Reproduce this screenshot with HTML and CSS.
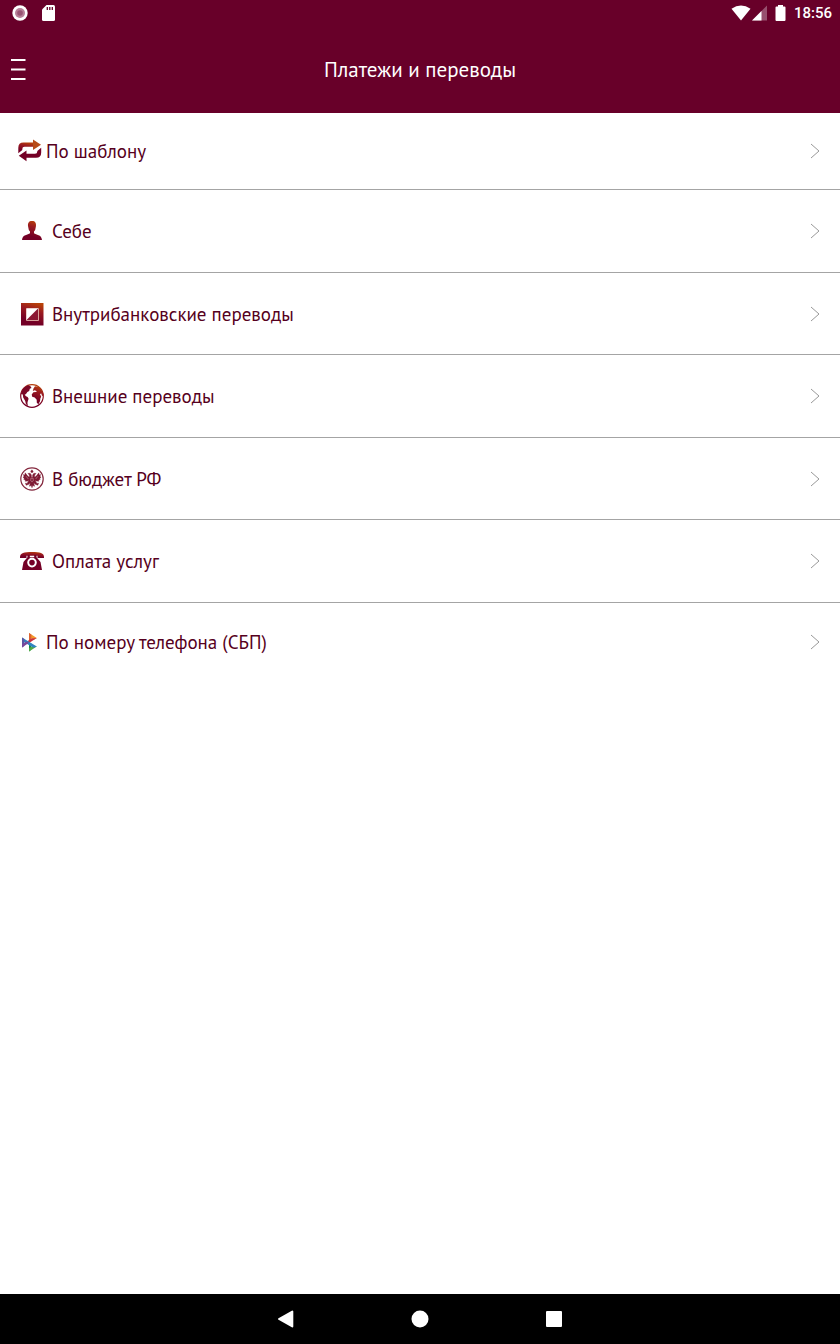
FILE: index.html
```html
<!DOCTYPE html>
<html lang="ru">
<head>
  <meta charset="UTF-8">
  <meta name="viewport" content="width=device-width, initial-scale=1">
  <title>Платежи и переводы</title>
  <link rel="stylesheet" href="styles.css">
</head>
<body>

  <!-- shared gradient for the menu icons -->
  <svg class="defs" aria-hidden="true">
    <defs>
      <linearGradient id="brand" x1="0.7" y1="0" x2="0.45" y2="0.8">
        <stop offset="0" stop-color="#b84208"/>
        <stop offset="0.4" stop-color="#9b1b20"/>
        <stop offset="1" stop-color="#740026"/>
      </linearGradient>
    </defs>
  </svg>

  <header class="header">
    <div class="status-bar">
      <div class="status-left">
        <svg width="16" height="16" viewBox="0 0 16 16">
          <circle cx="8" cy="8" r="7.7" fill="#fff"/>
          <circle cx="8" cy="8" r="5" fill="#b78099"/>
          <circle cx="8" cy="8" r="2.8" fill="#985474"/>
        </svg>
        <svg width="13" height="16" viewBox="0 0 13 16">
          <path d="M4.5 0H11.5Q13 0 13 1.5V14.5Q13 16 11.5 16H1.5Q0 16 0 14.5V4.5Z" fill="#fff"/>
          <path d="M5.3 2V5M7.8 2V5M10.3 2V5" stroke="#680029" stroke-width="1.3"/>
        </svg>
      </div>
      <div class="status-right">
        <svg width="20" height="16" viewBox="0 0 20 16">
          <path d="M10 15.5L0.5 3.8Q10 -2.8 19.5 3.8Z" fill="#fff"/>
        </svg>
        <svg width="16" height="16" viewBox="0 0 16 16">
          <path d="M16 0.5V15.5H1Z" fill="#97506e"/>
          <path d="M10.5 6V15.5H1Z" fill="#fff"/>
        </svg>
        <svg class="battery" width="11" height="16" viewBox="0 0 11 16">
          <path d="M3 0H8V1.5H9.5Q10.5 1.5 10.5 2.5V15Q10.5 16 9.5 16H1.5Q0.5 16 0.5 15V2.5Q0.5 1.5 1.5 1.5H3Z" fill="#fff"/>
        </svg>
        <span class="clock">18:56</span>
      </div>
    </div>
    <div class="title-bar">
      <button class="menu-btn" type="button" aria-label="Меню">
        <svg width="16" height="22" viewBox="0 0 16 22">
          <path d="M1 1H15.500M1 10.500H15.500M1 20H15.500" stroke="#fff" stroke-width="2"/>
        </svg>
      </button>
      <h1>Платежи и переводы</h1>
    </div>
  </header>

  <main>
    <nav class="payments">
      <a class="row compact" href="#template">
        <svg class="icon" width="24" height="24" viewBox="0 0 24 24">
          <path d="M0.3 14.2V8.8Q0.3 3.6 5.5 3.600H16V7.800H6.500Q4.300 7.800 4.300 10V11Z" fill="url(#brand)"/>
          <path d="M15 0.600L23 5.800L15 11Z" fill="#b74b18"/>
          <path d="M23.200 8.800V13.500Q23.200 18.800 18 18.800H7.500V14.800H17Q19.300 14.800 19.300 12.500V12Z" fill="#740026"/>
          <path d="M8.500 11.500L0.800 16.800L8.500 22.300Z" fill="#740026"/>
        </svg>
        <span class="label">По шаблону</span>
        <svg class="arrow" width="10" height="16" viewBox="0 0 10 16"><path d="M1 1L9 8L1 15"/></svg>
      </a>
      <a class="row" href="#self">
        <svg class="icon" width="24" height="24" viewBox="0 0 24 24">
          <path d="M12 2C15.2 2 16.4 4 15.9 7.500Q15.500 11.500 14 12.500V14.3C16 16 21.6 15.5 22 21H2C2.4 15.5 8 16 10 14.3V12.5Q8.500 11.5 8.100 7.5C7.6 4 8.8 2 12 2Z" fill="url(#brand)"/>
        </svg>
        <span class="label">Себе</span>
        <svg class="arrow" width="10" height="16" viewBox="0 0 10 16"><path d="M1 1L9 8L1 15"/></svg>
      </a>
      <a class="row" href="#bank">
        <svg class="icon" width="24" height="24" viewBox="0 0 24 24">
          <path d="M1 1H23.500V23.500H1Z" fill="url(#brand)"/>
          <path d="M6.5 6.5H18.5V18.5H6.5Z" fill="#8c1833" stroke="#d8a19b"/>
          <path d="M6.5 6.5H18L6.5 18Z" fill="#fff"/>
        </svg>
        <span class="label">Внутрибанковские переводы</span>
        <svg class="arrow" width="10" height="16" viewBox="0 0 10 16"><path d="M1 1L9 8L1 15"/></svg>
      </a>
      <a class="row" href="#external">
        <svg class="icon" width="24" height="24" viewBox="0 0 24 24">
          <circle cx="12" cy="12" r="11.3" fill="#fff" stroke="url(#brand)" stroke-width="1.2"/>
          <path d="M2 6.5Q4 2.5 8.5 1.2L10.5 2.3L11.5 4L9.8 4.7L9.2 7L7.4 8.1L6 10.1L4.7 10.7L6 12.2L7.6 13L8.600 14.8L7.8 17.3L7.400 19L8 22.3Q5.2 20.3 5.2 17L3.2 13.5L2.8 10.5L0.8 10Z" fill="#7b0827"/>
          <path d="M13.5 4.5L15 2.2L18.5 2.7Q22.6 6 23.4 11L22.1 12.3L21.3 9.5L19.9 10L21.2 12.8L20.4 14.2L20 17.3L18.4 20.3L16.8 18.8L16.7 15.8L14.7 13.4L12.2 12.8L11.7 10.6L13.4 8.2L15.8 8L17 7.2L14.7 6.2L12.8 7Z" fill="url(#brand)"/>
        </svg>
        <span class="label">Внешние переводы</span>
        <svg class="arrow" width="10" height="16" viewBox="0 0 10 16"><path d="M1 1L9 8L1 15"/></svg>
      </a>
      <a class="row" href="#budget">
        <svg class="icon" width="24" height="24" viewBox="0 0 24 24">
          <circle cx="12" cy="12" r="11.2" fill="#fff" stroke="#84283e" stroke-width="1.2"/>
          <g fill="#7d1933" stroke="#7d1933" stroke-width="0.4">
            <path d="M11.9 2.8L13.2 4.2L12.7 5.5H11.2L10.7 4.2Z"/>
            <path d="M11.4 10.3V8L10.1 6.2L7.8 6.5L9.2 7.8L9.6 10L8.2 9.6L5.1 5.8L4.9 8L3.5 7.5L4 9.8L3 10L4.3 11.7L3.7 12.3L5.5 13.3L5.1 14.2L7.5 14.1L8.8 13.5L7.1 16.4L5.4 16.2L6.2 18.3L8.8 17.2L10.3 15.8L9.4 19.3L11.2 18.6L12 20.8L12.8 18.6L14.6 19.3L13.7 15.8L15.2 17.2L17.8 18.3L18.6 16.2L16.9 16.4L15.2 13.5L16.5 14.1L18.9 14.2L18.5 13.3L20.3 12.3L19.7 11.7L21 10L20 9.8L20.5 7.5L19.1 8L18.9 5.8L15.8 9.6L14.4 10L14.8 7.8L16.2 6.5L13.9 6.2L12.6 8V10.3Z"/>
          </g>
          <path d="M10.8 11.3H13.2V14L12 15L10.8 14Z" fill="none" stroke="#d5a9af" stroke-width="0.5"/>
          <path d="M6 9.2L8.3 12M18 9.2L15.7 12" stroke="#d5a9af" stroke-width="0.5"/>
        </svg>
        <span class="label">В бюджет РФ</span>
        <svg class="arrow" width="10" height="16" viewBox="0 0 10 16"><path d="M1 1L9 8L1 15"/></svg>
      </a>
      <a class="row" href="#services">
        <svg class="icon" width="24" height="24" viewBox="0 0 24 24">
          <path d="M0 8C0 4 4 3 12 3S24 4 24 8V9H17.5V6.7H6.5V9H0Z" fill="url(#brand)"/>
          <path d="M7.5 6H9.8V8.2H14.2V6H16.5V8.2L20.5 13L22 21H2L3.5 13L7.5 8.2Z" fill="#740026"/>
          <circle cx="12" cy="13.6" r="3.8" fill="#740026" stroke="#fff" stroke-width="2"/>
        </svg>
        <span class="label">Оплата услуг</span>
        <svg class="arrow" width="10" height="16" viewBox="0 0 10 16"><path d="M1 1L9 8L1 15"/></svg>
      </a>
      <a class="row compact" href="#sbp">
        <svg class="icon" width="24" height="24" viewBox="0 0 24 24">
          <path d="M11 3L18.8 8L15.500 10L11 7Z" fill="#f2982c"/>
          <path d="M11 3L13.300 4.500V11.300L11 12.700Z" fill="#dd6230"/>
          <path d="M18.800 8L10.500 13.300L8.500 11.800L13.500 8.500Z" fill="#cb3045"/>
          <path d="M11 12.300L13.300 13.500V19.800L11 21.500Z" fill="#168a4c"/>
          <path d="M18.800 16.500L11 21.500V18.300L15.500 15.500Z" fill="#52ab45"/>
          <path d="M4 7.500L18.800 16.500L15.500 17.800L4 11Z" fill="#2f83c2"/>
          <path d="M4 7.500L6.300 9V16L4 17.500Z" fill="#5b56a3"/>
          <path d="M4 17.500V14.500L8.500 11.500L11 12.800Z" fill="#7b4699"/>
        </svg>
        <span class="label">По номеру телефона (СБП)</span>
        <svg class="arrow" width="10" height="16" viewBox="0 0 10 16"><path d="M1 1L9 8L1 15"/></svg>
      </a>
    </nav>
  </main>

  <footer class="system-nav">
    <button type="button" aria-label="Назад">
      <svg width="18" height="18" viewBox="0 0 18 18"><path d="M15.3 1.5V16.5L2 9Z" fill="#fff" stroke="#fff" stroke-width="2" stroke-linejoin="round"/></svg>
    </button>
    <button type="button" aria-label="Домой">
      <svg width="18" height="18" viewBox="0 0 18 18"><circle cx="9" cy="9" r="8.5" fill="#fff"/></svg>
    </button>
    <button type="button" aria-label="Недавние">
      <svg width="18" height="18" viewBox="0 0 18 18"><rect x="1" y="1" width="16" height="16" rx="1" fill="#fff"/></svg>
    </button>
  </footer>

</body>
</html>
```
FILE: styles.css
```css
* {
  box-sizing: border-box;
}

body {
  margin: 0;
  min-height: 100vh;
  display: flex;
  flex-direction: column;
  font-family: "PT Sans", "Noto Sans", sans-serif;
  background: #fff;
  color: #560020;
}

svg {
  display: block;
  flex-shrink: 0;
}

.defs {
  position: absolute;
  width: 0;
  height: 0;
}

button {
  border: none;
  padding: 0;
  background: none;
  cursor: pointer;
}

.header {
  background: #680029;
  color: #fff;
}

.status-bar {
  display: flex;
  justify-content: space-between;
  align-items: center;
  height: 26px;
  padding: 0 8px 0 12px;
}

.status-left {
  display: flex;
  gap: 14px;
}

.status-right {
  display: flex;
  align-items: center;
}

.battery {
  margin: 0 8px;
}

.clock {
  font-family: Roboto, sans-serif;
  font-size: 15px;
  font-weight: 500;
  line-height: 16px;
}

.title-bar {
  display: grid;
  grid-template-columns: 40px 1fr 40px;
  align-items: center;
  height: 87px;
}

.menu-btn {
  padding-left: 10px;
}

h1 {
  margin: 0;
  font-size: 21px;
  font-weight: 400;
  line-height: 28px;
  text-align: center;
}

main {
  flex: 1;
}

.row {
  display: flex;
  align-items: center;
  gap: 8px;
  min-height: 83px;
  padding: 0 20px;
  border-bottom: 1px solid #a4a4a4;
  color: inherit;
  text-decoration: none;
}

.row:nth-child(odd) {
  min-height: 82px;
}

.row.compact {
  gap: 4px;
  min-height: 77px;
  padding-left: 18px;
}

.row:last-child {
  border-bottom: none;
}

.label {
  flex: 1;
  font-size: 19px;
  line-height: 24px;
}

.arrow {
  fill: none;
  stroke: #999;
  stroke-width: 1;
}

.system-nav {
  display: flex;
  justify-content: center;
  gap: 116px;
  height: 50px;
  background: #000;
}
```
